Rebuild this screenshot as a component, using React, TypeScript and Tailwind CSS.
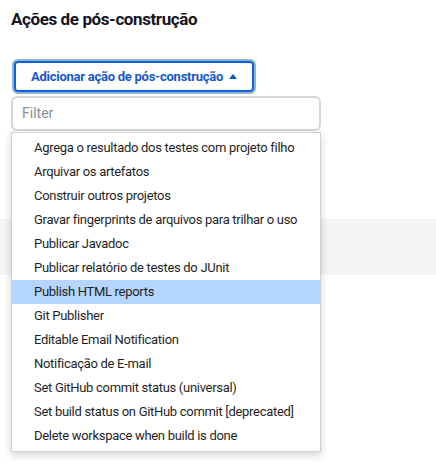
const items = [
  "Agrega o resultado dos testes com projeto filho",
  "Arquivar os artefatos",
  "Construir outros projetos",
  "Gravar fingerprints de arquivos para trilhar o uso",
  "Publicar Javadoc",
  "Publicar relatório de testes do JUnit",
  "Publish HTML reports",
  "Git Publisher",
  "Editable Email Notification",
  "Notificação de E-mail",
  "Set GitHub commit status (universal)",
  "Set build status on GitHub commit [deprecated]",
  "Delete workspace when build is done",
];

const selected = "Publish HTML reports";

export default function App() {
  return (
    <div className="relative h-[464px] w-[436px] overflow-hidden bg-white font-['Roboto',sans-serif] text-[#1f1f1f]">
      {/* grey band of the section behind the menu */}
      <div className="absolute left-0 right-0 top-[219px] h-[56px] bg-[#f4f4f6]" />

      <div className="relative px-[11px] pt-[6px]">
        <h2 className="whitespace-nowrap text-[17px] font-bold leading-[26px] tracking-[-0.4px] text-[#14141f]">
          Ações de pós-construção
        </h2>

        <div className="mt-[27px] pl-[1px]">
          <button className="flex h-[35px] w-[244px] items-center justify-center rounded-[6px] border-[2px] border-[#8fb3d3] p-0">
            <span className="flex h-full w-full items-center justify-center gap-[6px] whitespace-nowrap rounded-[4px] border-[2px] border-[#0b63d6] bg-white text-[13px] font-bold tracking-[-0.25px] text-[#1658c8]">
              Adicionar ação de pós-construção
              <svg width="8" height="5" viewBox="0 0 8 5" className="mt-[-1px]">
                <path d="M0 5 L4 0 L8 5 Z" fill="#1658c8" />
              </svg>
            </span>
          </button>
        </div>

        <div className="mt-[2px] flex h-[35px] w-[310px] items-center rounded-[6px] border-[2px] border-[#d4d6da] bg-white px-[9px] text-[14px] text-[#8a8c90]">
          Filter
        </div>

        <ul className="mt-[1px] w-[310px] border border-[#cfd2d6] bg-white py-[3px] shadow-[0_3px_8px_rgba(0,0,0,0.18)]">
          {items.map((item) => (
            <li
              key={item}
              className={
                "flex h-[24px] items-center whitespace-nowrap pl-[22px] text-[13px] tracking-[-0.3px] " +
                (item === selected ? "bg-[#b4d5fd]" : "")
              }
            >
              {item}
            </li>
          ))}
        </ul>
      </div>
    </div>
  );
}
